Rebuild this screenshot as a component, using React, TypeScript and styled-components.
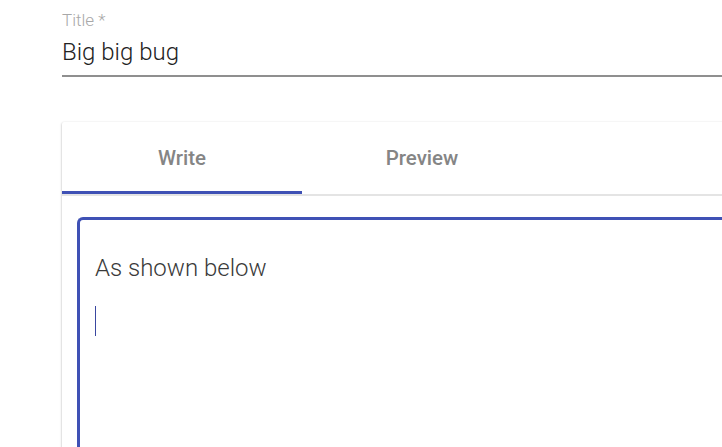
import React from "react";
import styled, { createGlobalStyle } from "styled-components";

const Global = createGlobalStyle`
  html, body { margin: 0; padding: 0; background: #ffffff; overflow: hidden; }
  body { font-family: Roboto, "Liberation Sans", sans-serif; }
`;

const Page = styled.div`
  width: 900px;
  padding: 12px 0 0 62px;
  box-sizing: border-box;
`;

const Field = styled.div`
  display: flex;
  flex-direction: column;
`;

const Label = styled.label`
  font-size: 17px;
  line-height: 17px;
  font-weight: 300;
  color: #a8a8a8;
`;

const Input = styled.div`
  margin-top: 9px;
  padding-bottom: 9px;
  font-size: 24px;
  line-height: 28px;
  font-weight: 300;
  color: #222222;
  border-bottom: 2px solid #8f8f8f;
`;

const Card = styled.div`
  margin-top: 45px;
  background: #ffffff;
  box-shadow: 0 0 2px rgba(0, 0, 0, 0.12), -1px 1px 2px rgba(0, 0, 0, 0.1);
  border-radius: 2px 0 0 0;
`;

const TabBar = styled.div`
  display: flex;
  height: 72px;
  border-bottom: 2px solid #e4e4e4;
`;

const Tab = styled.div<{ $active?: boolean }>`
  position: relative;
  width: 240px;
  display: flex;
  align-items: center;
  justify-content: center;
  font-size: 20.5px;
  font-weight: 500;
  color: #858585;
  &::after {
    content: "";
    display: ${(p) => (p.$active ? "block" : "none")};
    position: absolute;
    left: 0;
    right: 0;
    bottom: 0;
    height: 3px;
    background: #3f51b5;
  }
`;

const Body = styled.div`
  padding: 21px 0 0 15px;
`;

const Editor = styled.div`
  height: 300px;
  border: 3px solid #3f51b5;
  border-right: none;
  border-radius: 6px 0 0 0;
  padding: 31px 0 0 15px;
  display: flex;
  flex-direction: column;
  align-items: flex-start;
`;

const Line = styled.div`
  font-size: 24px;
  line-height: 34px;
  font-weight: 300;
  color: #3a3a3a;
`;

const Caret = styled.span`
  margin-top: 21px;
  width: 1px;
  height: 30px;
  background: #3a47a0;
`;

export default function App() {
  return (
    <>
      <Global />
      <Page>
        <Field>
          <Label>Title *</Label>
          <Input>Big big bug</Input>
        </Field>
        <Card>
          <TabBar>
            <Tab $active>Write</Tab>
            <Tab>Preview</Tab>
          </TabBar>
          <Body>
            <Editor>
              <Line>As shown below</Line>
              <Caret />
            </Editor>
          </Body>
        </Card>
      </Page>
    </>
  );
}
